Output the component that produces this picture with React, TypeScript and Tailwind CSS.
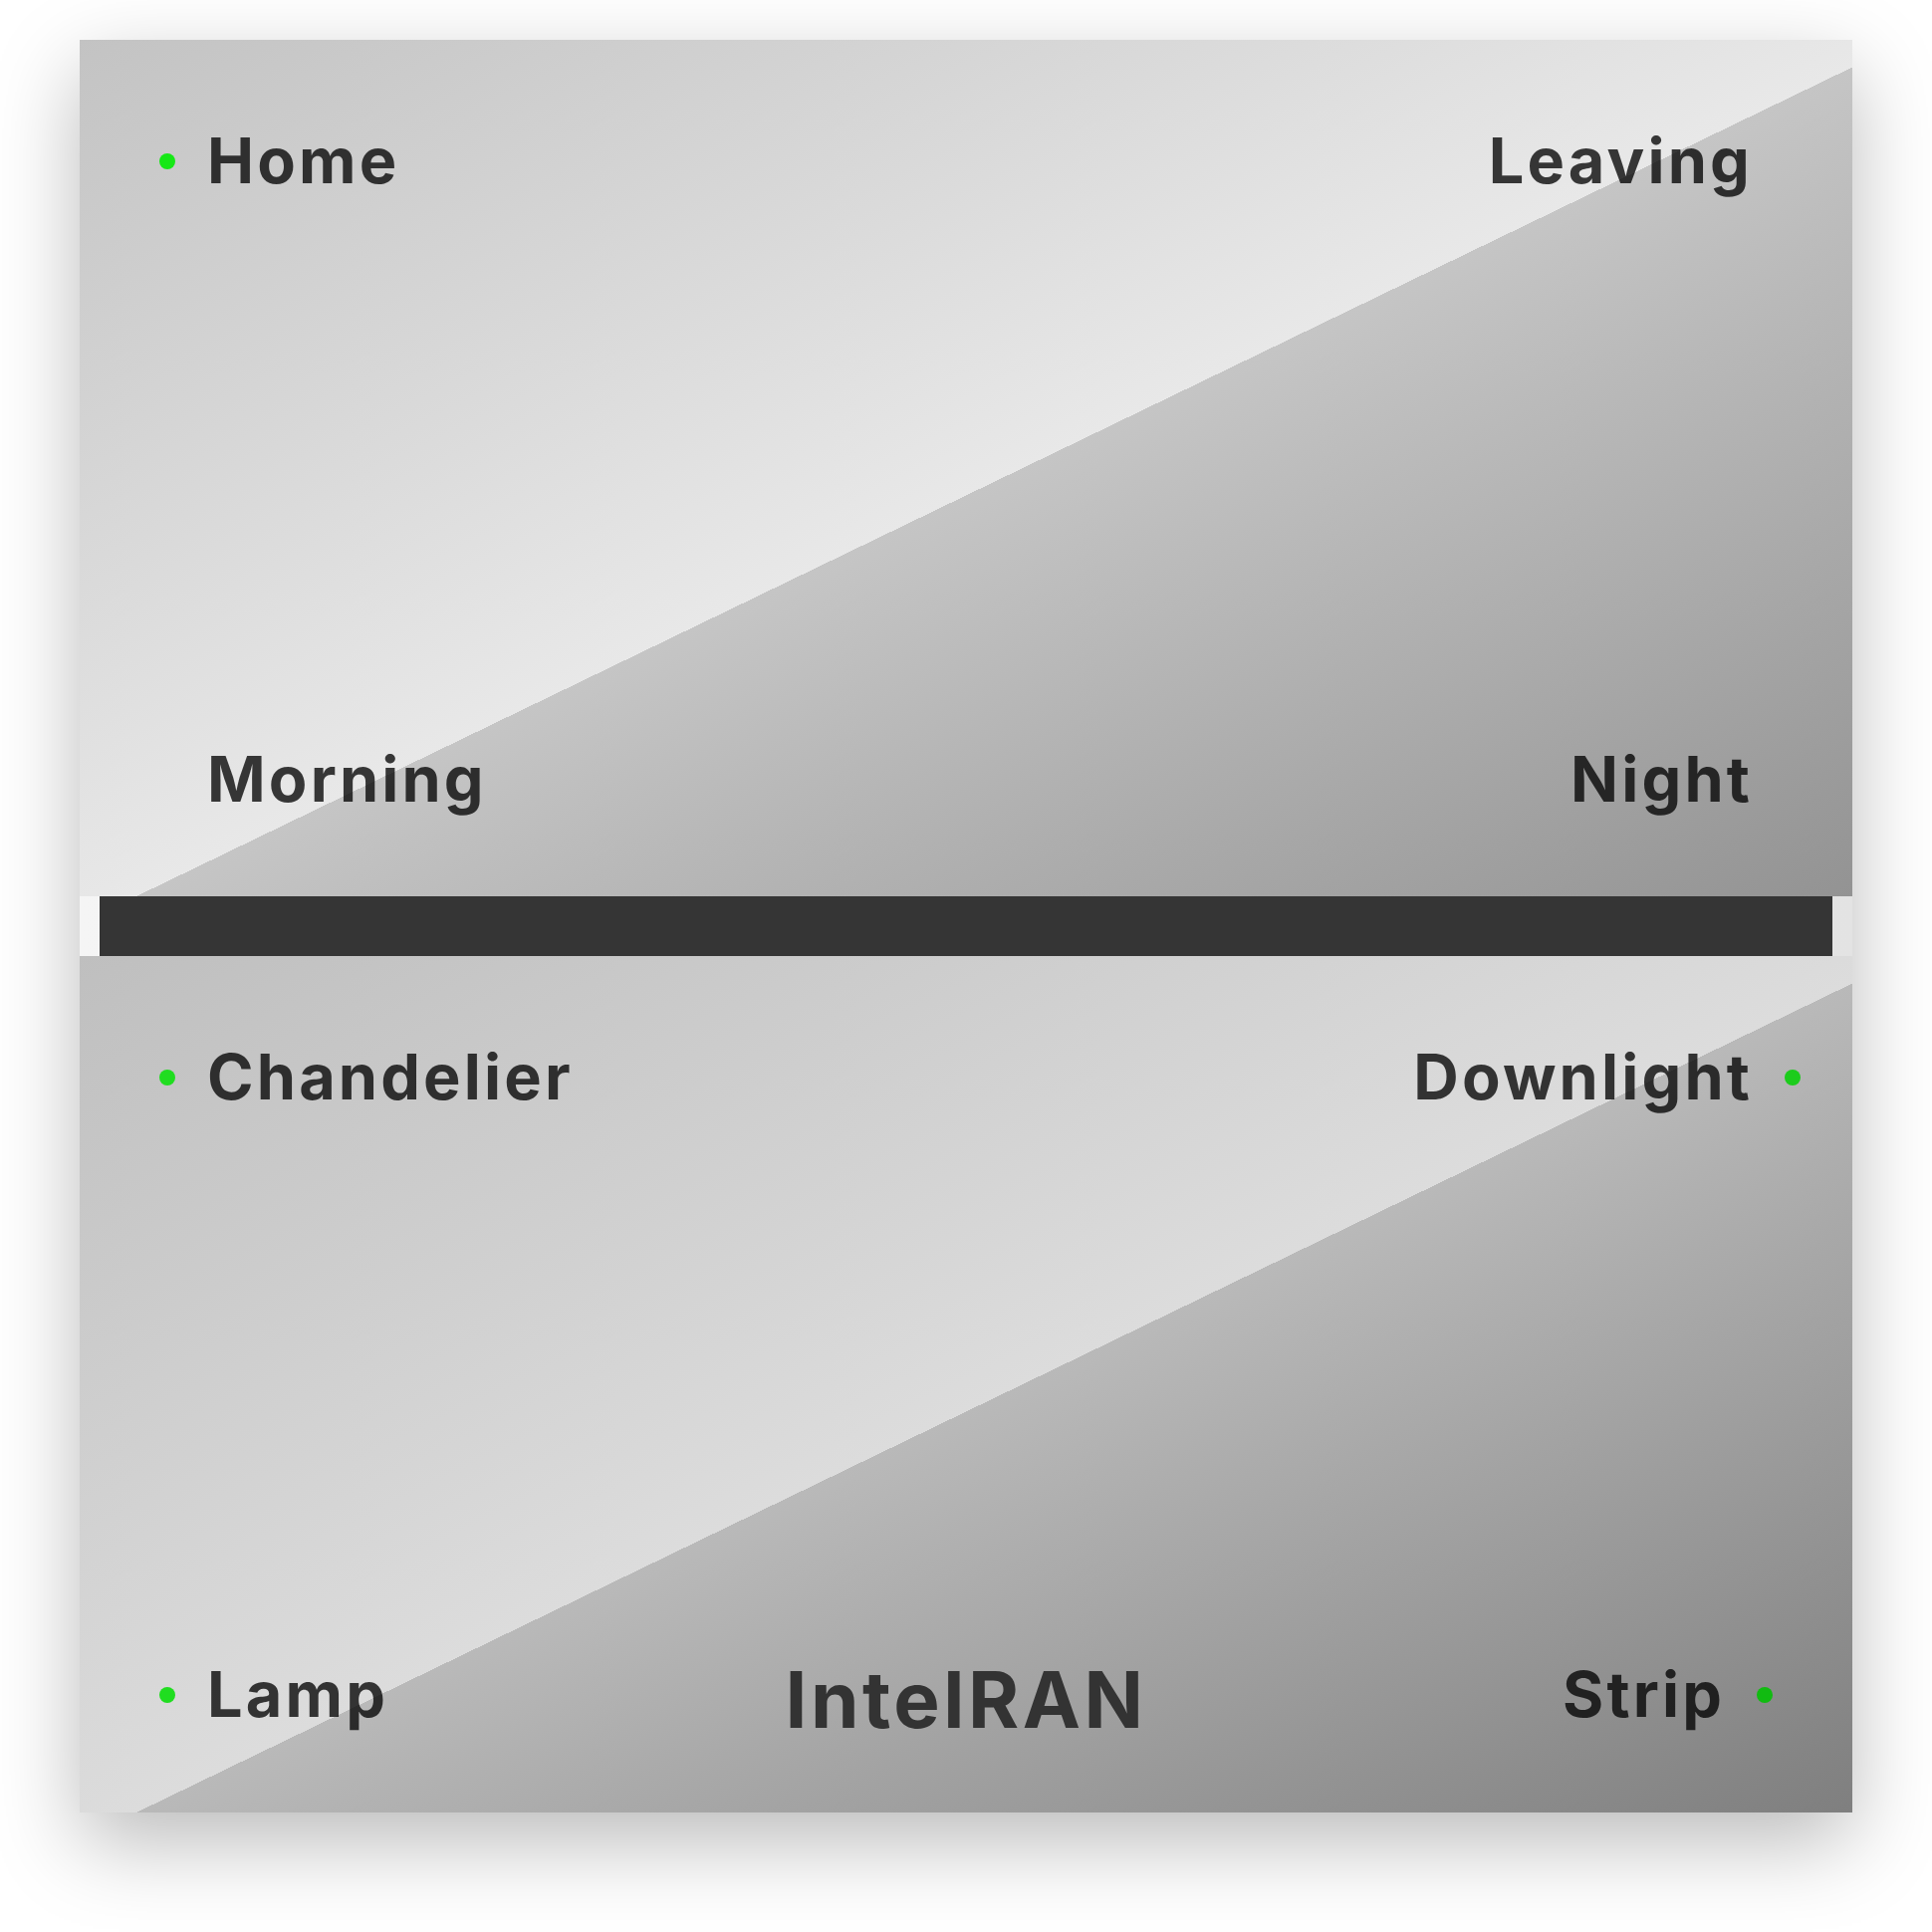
import React from "react";

type Label = {
  text: string;
  dot?: string;
};

const font = { fontFamily: "Inter, 'Open Sans', sans-serif" };

function Dot({ color }: { color?: string }) {
  // keeps the same width when there is no dot, so the text lines up
  return <span className={`block w-4 h-4 shrink-0 rounded-full ${color ?? "invisible"}`} />;
}

function LeftLabel({ item }: { item: Label }) {
  return (
    <div className="flex items-center gap-8">
      <Dot color={item.dot} />
      <span className="text-[63px] leading-none font-bold tracking-[0.05em] text-black/[0.77]">{item.text}</span>
    </div>
  );
}

function RightLabel({ item }: { item: Label }) {
  return (
    <div className="flex items-center gap-8">
      <span className="text-[63px] leading-none font-bold tracking-[0.05em] text-black/[0.77]">{item.text}</span>
      <Dot color={item.dot} />
    </div>
  );
}

export default function App() {
  return (
    <div className="w-[1940px] h-[1940px] bg-white pt-[40px] pl-[80px]" style={font}>
      <div className="w-[1780px] flex flex-col shadow-[0_30px_80px_rgba(0,0,0,0.27)]">
        {/* Scenes */}
        <div className="h-[860px] flex flex-col justify-between pt-[90px] pb-[86px] bg-[linear-gradient(to_bottom_right,#c3c3c3_0%,#e8e8e8_51.6%,#c5c5c5_51.6%,#939393_100%)]">
          <div className="flex justify-between items-center pl-[80px] pr-[52px]">
            <LeftLabel item={{ text: "Home", dot: "bg-[#16e816]" }} />
            <RightLabel item={{ text: "Leaving" }} />
          </div>
          <div className="flex justify-between items-center pl-[80px] pr-[52px]">
            <LeftLabel item={{ text: "Morning" }} />
            <RightLabel item={{ text: "Night" }} />
          </div>
        </div>

        {/* Divider */}
        <div className="h-[60px] px-[20px] bg-[linear-gradient(to_right,#f5f5f5,#e3e3e3)]">
          <div className="h-full bg-[#353535]" />
        </div>

        {/* Lights */}
        <div className="h-[860px] flex flex-col justify-between pt-[90px] pb-[87px] bg-[linear-gradient(to_bottom_right,#bfbfbf_0%,#dcdcdc_51.6%,#b9b9b9_51.6%,#7f7f7f_100%)]">
          <div className="flex justify-between items-center pl-[80px] pr-[52px]">
            <LeftLabel item={{ text: "Chandelier", dot: "bg-[#20dd20]" }} />
            <RightLabel item={{ text: "Downlight", dot: "bg-[#1ccc1c]" }} />
          </div>
          <div className="grid grid-cols-3 grid-rows-[63px] items-center px-[80px]">
            <LeftLabel item={{ text: "Lamp", dot: "bg-[#20dd20]" }} />
            <div className="flex justify-center">
              <span className="mt-[11px] text-[78px] leading-none font-bold tracking-[0.045em] text-[#333]">IntelRAN</span>
            </div>
            <div className="flex justify-end">
              <RightLabel item={{ text: "Strip", dot: "bg-[#11bb11]" }} />
            </div>
          </div>
        </div>
      </div>
    </div>
  );
}
